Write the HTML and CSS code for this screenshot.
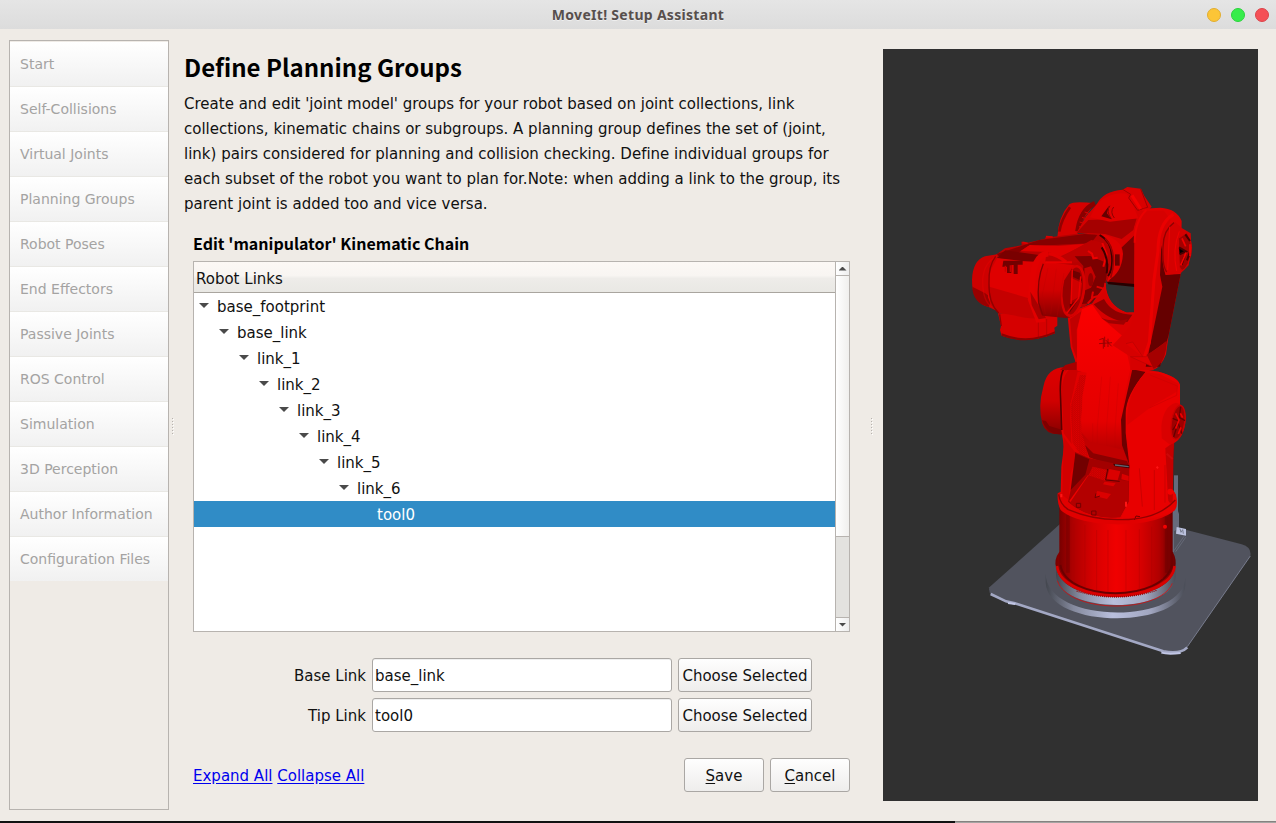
FILE: index.html
```html
<!DOCTYPE html>
<html lang="en">
<head>
<meta charset="utf-8">
<title>MoveIt! Setup Assistant</title>
<link rel="stylesheet" href="styles.css">
</head>
<body>
<div class="window">
  <header class="titlebar">
    <span class="title">MoveIt! Setup Assistant</span>
    <div class="controls"><i class="dot yellow"></i><i class="dot green"></i><i class="dot red"></i></div>
  </header>
  <div class="body">
    <nav class="sidebar">
      <div class="step">Start</div><div class="step">Self-Collisions</div><div class="step">Virtual Joints</div><div class="step">Planning Groups</div><div class="step">Robot Poses</div><div class="step">End Effectors</div><div class="step">Passive Joints</div><div class="step">ROS Control</div><div class="step">Simulation</div><div class="step">3D Perception</div><div class="step">Author Information</div><div class="step">Configuration Files</div>
    </nav>
    <div class="grip"><i></i><i></i><i></i><i></i><i></i><i></i></div>
    <main class="main">
      <h1>Define Planning Groups</h1>
      <p class="intro">Create and edit 'joint model' groups for your robot based on joint collections, link<br>collections, kinematic chains or subgroups. A planning group defines the set of (joint,<br>link) pairs considered for planning and collision checking. Define individual groups for<br>each subset of the robot you want to plan for.Note: when adding a link to the group, its<br>parent joint is added too and vice versa.</p>
      <section class="editor">
        <h2>Edit 'manipulator' Kinematic Chain</h2>
        <div class="tree">
          <div class="list">
            <div class="head">Robot Links</div>
            <div class="row d0"><b class="down"></b>base_footprint</div>
            <div class="row d1"><b class="down"></b>base_link</div>
            <div class="row d2"><b class="down"></b>link_1</div>
            <div class="row d3"><b class="down"></b>link_2</div>
            <div class="row d4"><b class="down"></b>link_3</div>
            <div class="row d5"><b class="down"></b>link_4</div>
            <div class="row d6"><b class="down"></b>link_5</div>
            <div class="row d7"><b class="down"></b>link_6</div>
            <div class="row d8 selected">tool0</div>
          </div>
          <div class="scroll">
            <div class="arrow"><b class="up"></b></div>
            <div class="thumb"></div>
            <div class="trough"></div>
            <div class="arrow last"><b class="down"></b></div>
          </div>
        </div>
        <div class="fields">
          <label>Base Link</label><div class="input">base_link</div><button>Choose Selected</button>
          <label>Tip Link</label><div class="input">tool0</div><button>Choose Selected</button>
        </div>
        <div class="actions">
          <div class="links"><a>Expand All</a> <a>Collapse All</a></div>
          <button><u>S</u>ave</button><button><u>C</u>ancel</button>
        </div>
      </section>
    </main>
    <div class="grip"><i></i><i></i><i></i><i></i><i></i><i></i></div>
    <svg class="view" viewBox="883 49 375 752">
      <defs>
        <linearGradient id="cyl"><stop offset="0" stop-color="#780000"/><stop offset=".12" stop-color="#ae0000"/><stop offset=".3" stop-color="#d60000"/><stop offset=".5" stop-color="#f00000"/><stop offset=".7" stop-color="#db0000"/><stop offset=".88" stop-color="#b00000"/><stop offset="1" stop-color="#680000"/></linearGradient>
        <linearGradient id="metal"><stop offset="0" stop-color="#43464e"/><stop offset=".2" stop-color="#858a9e"/><stop offset=".48" stop-color="#b9bfdd"/><stop offset=".75" stop-color="#a1a6c0"/><stop offset="1" stop-color="#4a4d57"/></linearGradient>
        <linearGradient id="fall" x2="0" y2="1"><stop offset="0" stop-color="#dd0000"/><stop offset=".5" stop-color="#d00000"/><stop offset="1" stop-color="#850000"/></linearGradient>
        <linearGradient id="fall2" x2="0" y2="1"><stop offset="0" stop-color="#ee0000"/><stop offset=".6" stop-color="#e40000"/><stop offset="1" stop-color="#a00000"/></linearGradient>
        <linearGradient id="neck" x2="0" y2="1"><stop offset="0" stop-color="#fb0000"/><stop offset="1" stop-color="#ee0000"/></linearGradient>
        <pattern id="mesh" width="7" height="6" patternUnits="userSpaceOnUse"><path d="M0 1h4M3 4h4" stroke="#a90000" stroke-width="1.6"/></pattern>
      </defs>
      <!-- mounting plate and base -->
      <g transform="translate(980 490) scale(.33333)">
        <path d="M28 292L240 102L600 115L785 163Q816 172 811 198L622 470Q602 494 560 486L36 318Q25 308 28 292Z" fill="#51535e"/>
        <path d="M32 312L78 334L105 340L550 484Q600 494 622 472" fill="none" stroke="#a3a8c4" stroke-width="8"/>
        <path d="M84 339l22 3M544 488q20 6 58 1" stroke="#c2c7e6" stroke-width="6" fill="none"/>
        <path d="M622 470L811 198" stroke="#777b8d" stroke-width="3"/>
        <path d="M584 0h9v60l4 12v42l-15 10v62h-10V60z" fill="#676b7b"/>
        <path d="M590 111l28 6v20l-30-6z" fill="#bcc2df"/><path d="M600 116l3 11l5-8l2 12" stroke="#777c90" stroke-width="3" fill="none"/>
        <path d="M582 182l30-43M587 185l30-43" stroke="#656977" stroke-width="3"/>
        <path d="M197 250C197 405 616 405 616 260L616 286C610 419 204 419 197 278Z" fill="url(#metal)"/>
        <path d="M228 228C230 350 580 350 587 228V260C580 374 235 374 228 255Z" fill="url(#metal)"/>
        <path d="M232 272C265 372 540 372 577 280" fill="none" stroke="#ec0000" stroke-width="2"/>
        <path d="M238 185Q220 210 229 235C250 350 565 350 585 235Q592 210 578 185Z" fill="url(#cyl)"/>
        <path d="M231 228C245 345 570 345 584 228" fill="none" stroke="#d90000" stroke-width="8"/>
        <path d="M290 303Q410 340 530 301" fill="none" stroke="#8e0000" stroke-width="4" stroke-dasharray="3 3"/>
        <path d="M238 50V225C260 338 550 338 578 225V50Z" fill="url(#cyl)"/>
        <path d="M241 225C260 338 550 338 576 225" fill="none" stroke="#6b0000" stroke-width="6"/>
        <path d="M282 100V280M315 105V293M350 120V301M384 120V306M438 120V306M478 118V301M515 110V288M548 100V268" stroke="#a80000" stroke-opacity=".35" stroke-width="3"/>
        <path d="M264 75V248M560 80V248" stroke="#610000" stroke-width="11" stroke-opacity=".35"/>
        <circle cx="555" cy="110" r="6" fill="#f50000"/>
      </g>
      <!-- shoulder and first joint -->
      <g transform="translate(1020 350) scale(.33333)">
        <path d="M462 376h12v135h-12z" fill="#646b7b"/>
        <path d="M138 52Q82 50 70 110Q53 170 67 221Q78 258 130 252Z" fill="url(#fall)"/>
        <path d="M66 211l12 2l10 15l40 12v13Q82 256 66 211Z" fill="#7d0000"/>
        <path d="M165 40Q122 60 120 125L124 240L132 290L124 350L122 425L113 430Q111 459 122 480C180 535 400 540 465 480Q475 465 468 435L459 420V325L462 280L480 160V105Q475 80 415 65L335 50Z" fill="#e10000"/>
        <path d="M135 53Q121 65 121 120L125 240" fill="none" stroke="#580000" stroke-width="5"/>
        <path d="M168 45Q126 63 125 125L131 250L155 282L150 165L185 66Z" fill="#cc0000"/>
        <path d="M131 260L155 294L172 314L152 370L146 450L127 435Z" fill="#d20000"/>
        <path d="M173 65L202 68L184 220L207 324L176 314L154 275L150 168Z" fill="#e00000"/>
        <path d="M180 75L200 75L182 210L205 322L180 312L158 278L151 170Z" fill="url(#mesh)"/>
        <path d="M172 20H334L330 60L310 150L306 280L327 345L211 322L184 246L187 140L200 68L172 62Z" fill="url(#fall2)"/>
        <path d="M218 220V314M245 80L232 230V320M271 80L260 230V327M295 100L285 240V334" fill="none" stroke="#bc0000" stroke-width="2" opacity=".4"/>
        <path d="M184 247L210 275L312 300L327 348Q265 339 208 322Z" fill="#c10000"/>
        <path d="M195 285L220 310L321 333L327 348Q250 342 208 322Z" fill="#8a0000"/>
        <path d="M337 58L377 66Q318 134 317 190V248L328 345L306 286L303 210Z" fill="#6c0000"/>
        <path d="M377 66Q320 134 318 190V248L330 345L326 455L303 505L360 510Q440 500 465 480L468 435L459 420V300L480 155V105Q470 80 415 65Z" fill="#e80000"/>
        <path d="M378 67L420 72L475 101L470 125L400 166L322 225Q315 135 378 67Z" fill="#dc0000"/>
        <path d="M390 75L472 108L470 136L388 174" fill="none" stroke="#cd0000" stroke-width="2"/>
        <path d="M165 306L207 324L328 350L326 455L301 500Q205 510 144 455L165 365Z" fill="#a30000"/>
        <path d="M166 310L208 328L196 374L152 420Z" fill="#720000"/>
        <path d="M150 455L207 376" stroke="#ee0000" stroke-width="6"/>
        <path d="M206 375L326 394L324 455L300 502Q210 510 150 458Z" fill="#b30000"/>
        <path d="M218 350L262 360L255 392L206 376ZM268 357l33 7l-8 27l-33-5zM306 371l20 7v15l-22-5zM254 395l33 5l-7 9l-31-6zM232 423l41 9l-12 15l-36-9z" fill="#db0000"/>
        <path d="M218 350L262 360L255 392L206 376Z" fill="url(#mesh)"/>
        <path d="M263 357l-6 33l42 4" fill="none" stroke="#5c0000" stroke-width="3"/><path d="M279 341l49 4v10l-44-6z" fill="#420000"/>
        <path d="M285 345l41 5" stroke="#5f6672" stroke-width="4"/>
        <path d="M169 460h13v12h-13zM215 483h13v12h-13zM343 510l5-12l12 2M228 430l-3 13l15-5" fill="none" stroke="#720000" stroke-width="3"/>
        <path d="M318 455v15M410 350l4 5M440 311l18 16M124 432v10" stroke="#ff1515" stroke-width="6"/>
        <path d="M358 355L367 470M403 360V480M435 345V458" stroke="#bd0000" stroke-width="2"/>
        <path d="M436 295l27-20-5 180q-12 10-14-10z" fill="#a80000" opacity=".6"/>
        <circle cx="451" cy="425" r="9" fill="#f20000"/>
        <path d="M424 228Q430 168 468 158Q500 165 497 213Q490 273 450 284L425 265Z" fill="#d90000"/>
        <ellipse cx="474" cy="217" rx="20" ry="51" transform="rotate(9 474 217)" fill="#9d0000" stroke="#c80000" stroke-width="4"/>
        <path d="M482 170l-4 32l17 10M458 205l18 8l-18 27M461 261l13-43l12 33" stroke="#660000" stroke-width="4" fill="none"/>
        <path d="M467 190l10 20l-10 26M481 190l7 13M483 232l-8 20" stroke="#ef0000" stroke-width="5" fill="none"/>
        <path d="M116 433Q120 463 145 479Q220 511 302 509Q412 510 466 450" fill="none" stroke="#930000" stroke-width="4"/>
      </g>
      <!-- upper arm, forearm and wrist -->
      <g transform="translate(960 170) scale(.33333)">
        <path d="M292 202Q295 140 328 103Q340 92 405 100L372 145L348 202Z" fill="#d50000"/>
        <path d="M298 185Q303 150 330 112" fill="none" stroke="#930000" stroke-width="8"/>
        <path d="M405 100Q362 120 353 184" fill="none" stroke="#890000" stroke-width="15"/>
        <path d="M374 126l24 8M366 142l23 8M359 156l23 8M357 170l23 6" stroke="#d80000" stroke-width="3"/>
        <path d="M350 188L378 139L410 103Q430 63 488 59L502 51L543 56L553 78L575 110L541 145L527 345L440 339L457 230L412 195Z" fill="#d50000"/>
        <path d="M350 188L385 150L530 145L520 180L485 207L435 192Z" fill="#a50000"/>
        <path d="M410 104Q448 64 500 71L521 110L535 145L450 155L390 142Z" fill="#df0000"/>
        <path d="M488 58L512 73L506 84L533 121L563 112L542 57" fill="#d90000" stroke="#a00000" stroke-width="3"/>
        <path d="M516 76L542 117" stroke="#f40000" stroke-width="9"/>
        <path d="M424 139L447 107L441 130L455 148Z" fill="#660000"/>
        <path d="M450 107Q437 124 454 146M461 111Q449 126 463 144" fill="none" stroke="#8b0000" stroke-width="3"/>
        <path d="M484 233L525 194V350L441 341L449 329Q485 301 484 233Z" fill="#7b0000"/>
        <path d="M420 193Q485 204 489 251Q486 309 444 331L451 241Z" fill="#df0000"/>
        <path d="M465 253h14v34h-14z" fill="#6c0000"/>
        <path d="M322 430L397 400L430 351L438 344Q441 400 499 427L521 425L525 250Q521 150 549 116L601 113Q650 116 665 153L662 312L626 495L618 553Q603 593 579 600H350L345 571L332 532Z" fill="#de0000"/>
        <path d="M438 335L525 346L522 427L499 427Q441 405 438 344Z" fill="#303030"/>
        <path d="M441 335L525 342V351L445 343Z" fill="#260000"/>
        <path d="M397 400L434 355Q447 412 500 428L520 431L516 470L458 525L420 527L378 444Z" fill="#d80000"/>
        <path d="M401 403L432 387Q456 433 517 434L502 456Q446 453 401 403Z" fill="#8c0000"/>
        <path d="M417 440Q453 458 504 448L491 464L447 460Z" fill="#a00000"/>
        <path d="M330 447L365 423L350 480L352 570L337 530Z" fill="#c00000"/>
        <path d="M366 418L397 404L425 445L490 500L512 600H350L352 480Z" fill="url(#neck)"/>
        <path d="M418 509l12-4v31M434 500v31M444 506v25M417 521l39-3M437 510l18 19" fill="none" stroke="#8e0000" stroke-width="2.5"/>
        <path d="M522 430L512 468L458 526L511 560V600H580L565 550L608 350L600 315L604 225L632 150L612 122L544 123L523 170Z" fill="#d60000"/>
        <path d="M604 225L600 315L607 350L557 590L600 590L626 495L662 312L617 314Z" fill="#650000"/>
        <path d="M559 120Q524 154 524 218" fill="none" stroke="#e80000" stroke-width="6"/>
        <path d="M640 133Q594 160 594 243L582 330L568 517L552 565" fill="none" stroke="#ea0000" stroke-width="9"/>
        <path d="M498 521l20-5l30 44M557 560L618 516L607 572L581 592L511 560Z" stroke="#b80000" stroke-width="2" fill="#de0000"/>
        <path d="M560 554Q595 535 620 512Q620 575 581 597Z" fill="#a50000"/>
        <path d="M646 156Q616 167 607 225Q604 281 617 315L662 310L686 286L694 231L692 190L665 174Z" fill="#d40000"/>
        <path d="M642 158Q610 180 609 231Q606 288 620 306" fill="none" stroke="#910000" stroke-width="4"/>
        <path d="M658 184Q636 240 650 303M629 170L623 300" fill="none" stroke="#ef0000" stroke-width="3"/>
        <path d="M681 188Q707 227 684 281Q666 316 658 290L655 205Z" fill="#a20000" stroke="#d30000" stroke-width="3"/>
        <path d="M676 193l14 20M657 232l21 12l-19 9M681 271l8-23M665 284l8-25" stroke="#470000" stroke-width="6"/>
        <path d="M666 205l11 24M678 248l-16 38M690 223v35" stroke="#f20000" stroke-width="5"/>
        <!-- forearm -->
        <path d="M100 260L135 235L185 226L184 215L200 219L255 206L258 198L280 200L351 191L418 193L454 227L451 313L410 380L372 411L292 415L182 272Z" fill="#b80000"/>
        <path d="M110 252L238 210L374 192L412 195L393 220L203 229L135 276Z" fill="#850000"/>
        <path d="M187 217L203 220M258 200L278 201" stroke="#db0000" stroke-width="5"/>
        <path d="M182 243L209 225L295 228L380 221L302 259L266 246Z" fill="#e00000"/>
        <path d="M303 262L394 210L431 219L445 274L438 325L369 272L338 279Z" fill="#bd0000"/>
        <path d="M344 259L391 258L446 281L435 345L395 400L364 402L370 288Z" fill="#7c0000"/>
        <path d="M384 243l12 8l4 14l13-2M427 219l13 35l-10 36" stroke="#ed0000" stroke-width="6" fill="none"/>
        <path d="M419 195Q455 215 456 260Q459 299 444 318M425 232Q447 265 440 310" fill="none" stroke="#3a0000" stroke-width="6"/>
        <path d="M435 205Q475 247 452 323" fill="none" stroke="#9d0000" stroke-width="5"/>
        <path d="M373 295l20-6l14 31l-14 33l-18 8z" fill="#c40000"/><ellipse cx="392" cy="329" rx="8" ry="20" fill="#900000"/>
        <path d="M436 339l-3 20l-18 19l-15 4l-17 19M410 350l20 6M399 365l-4 22" fill="none" stroke="#dc0000" stroke-width="6"/>
        <!-- wrist -->
        <path d="M114 430L123 468L120 480L125 497Q199 525 285 490L283 473L292 467V437Z" fill="#d60000"/>
        <path d="M119 433L124 468" stroke="#950000" stroke-width="4"/><path d="M235 440V506M260 447V501" stroke="#b80000" stroke-width="3"/>
        <path d="M125 490Q203 522 285 484V490Q200 528 125 497Z" fill="#8e0000"/>
        <path d="M112 253L75 259Q38 272 36 329Q35 398 86 411L105 420Z" fill="#cd0000"/>
        <path d="M37 350Q38 398 86 411L98 388L76 370Z" fill="#980000"/>
        <path d="M112 258Q70 278 68 332Q68 395 96 410" fill="none" stroke="#ec0000" stroke-width="4" opacity=".4"/>
        <path d="M112 263L222 273L241 258L258 259L232 448L195 442L118 429L95 410L84 382L90 305Z" fill="#df0000"/>
        <path d="M88 350L211 386L232 447L195 443L115 428L91 405Z" fill="#c50000"/>
        <path d="M107 259Q85 287 87 340Q85 399 116 429" fill="none" stroke="#900000" stroke-width="4"/>
        <path d="M117 258L136 241L237 255L224 275L183 273L112 264Z" fill="#790000"/>
        <path d="M130 272h58v12h-15v28h-12v-27h-7v24h-13v-19h-14z" fill="#730000"/>
        <path d="M136 287v18M151 286v20" stroke="#c70000" stroke-width="4"/>
        <path d="M265 251Q225 254 219 316L212 388L235 449L255 447" fill="none" stroke="#e20000" stroke-width="17"/>
        <path d="M211 365L215 405L236 448L258 444L238 410Z" fill="#a80000"/>
        <path d="M255 275L342 286Q378 306 374 366Q360 444 318 444L247 437Q225 401 238 329Q244 289 255 275Z" fill="url(#fall)"/>
        <path d="M250 281Q230 329 236 398L248 435" fill="none" stroke="#830000" stroke-width="4"/>
        <path d="M265 251Q292 254 318 276" fill="none" stroke="#e20000" stroke-width="10"/>
        <path d="M256 277H336" stroke="#ea0000" stroke-width="6"/>
        <path d="M264 294L247 374L256 432M289 296L272 433M312 309L291 440" stroke="#b70000" stroke-width="2" fill="none" opacity=".4"/>
        <ellipse cx="340" cy="363" rx="31" ry="75" transform="rotate(9 340 363)" fill="#a20000" stroke="#d50000" stroke-width="8"/>
        <path d="M336 295L332 398L317 425Q300 380 313 331Z" fill="#960000"/>
        <path d="M334 324L366 339L361 379L333 394Z" fill="#cf0000"/>
        <path d="M337 301l23 7l6 25l-29-13zM329 402l25-11l-25 37z" fill="#6f0000"/>
        <path d="M337 300L333 402M362 319L356 384L320 430" stroke="#ec0000" stroke-width="4" fill="none"/>
        <path d="M350 575V600H300L316 585Z" fill="#a60000"/>
      </g>
    </svg>
  </div>
  <footer class="edge"><i></i></footer>
</div>
</body>
</html>
```
FILE: styles.css
```css
* { box-sizing: border-box; }
body { margin: 0; background: #efebe6; color: #111; font: 15px "DejaVu Sans", sans-serif; }
.window { width: 1276px; height: 823px; display: flex; flex-direction: column; overflow: hidden; }
.titlebar { height: 29px; flex: none; display: grid; grid-template-columns: 1fr auto 1fr; align-items: center; background: linear-gradient(#e5e5e5, #dcdcdc); padding: 0 7px; }
.title { grid-column: 2; color: #574f4d; font: bold 14px "Noto Sans", sans-serif; letter-spacing: 0.3px; text-shadow: 0 1px #eee; }
.controls { display: flex; justify-content: flex-end; gap: 10px; }
.dot { width: 14px; height: 14px; border-radius: 50%; border: 1px solid; }
.yellow { background: #fcc537; border-color: #e1ae31; }
.green { background: #37ed4b; border-color: #2bd33d; }
.red { background: #f55056; border-color: #dc444b; }
.body { height: 792px; flex: none; display: flex; align-items: flex-start; }
.sidebar { width: 160px; height: 770px; flex: none; margin: 11px 0 0 9px; padding-top: 1px; border: 1px solid #b7b3af; }
.step { height: 45px; padding: 0 0 0 10px; line-height: 45px; font-size: 14px; color: #a4a3a2; white-space: nowrap; background: linear-gradient(#fff, #f1f1f1); border-bottom: 1px solid #e9e8e4; }
.step:last-child { height: 44px; border-bottom: 0; }
.grip { flex: none; width: 2px; margin: 389px 0 0 3px; display: flex; flex-direction: column; gap: 2px; }
.grip i { width: 1px; height: 1px; background: #b6b2ae; box-shadow: 1px 1px #fff; }
.main { width: 686px; flex: none; margin-left: 10px; }
.main + .grip { margin-left: 1px; }
h1 { margin: 18px 0 0; height: 45px; line-height: 39px; font-family: "Noto Sans CJK SC", sans-serif; font-size: 24px; font-weight: 700; color: #000; white-space: nowrap; }
.intro { margin: 0; line-height: 25px; letter-spacing: 0.005px; white-space: nowrap; }
.editor { width: 657px; margin-left: 9px; }
h2 { margin: 10px 0 0; height: 34px; font: 700 16px/33px "Noto Sans CJK SC", sans-serif; color: #000; }
.tree { height: 371px; display: flex; border: 1px solid #b7b3af; background: #fff; }
.list { flex: 1; }
.head { height: 31px; padding-left: 2px; line-height: 34px; background: linear-gradient(#fcf8f5, #f8f5f2 45%, #eeece9 55%, #e9e8e4); border-bottom: 1px solid #a9a59f; }
.row { height: 26px; padding-top: 2px; line-height: 24px; display: flex; align-items: center; padding-left: calc(5px + 20px * var(--d)); }
.row .down { margin: -3px 9px 0 0; }
.down, .up { width: 10px; height: 5px; background: #4a4a4a; clip-path: polygon(0 0, 100% 0, 50% 100%); }
.row .down { margin-right: 8px; }
.up { clip-path: polygon(0 100%, 50% 0, 100% 100%); }
.d0 { --d: 0; } .d1 { --d: 1; } .d2 { --d: 2; } .d3 { --d: 3; } .d4 { --d: 4; } .d5 { --d: 5; } .d6 { --d: 6; } .d7 { --d: 7; }
.selected { padding-left: 183px; color: #fff; background: #308cc6; }
.scroll { width: 14px; border-left: 1px solid #b7b3af; display: flex; flex-direction: column; }
.arrow { height: 14px; flex: none; display: flex; align-items: center; justify-content: center; border-bottom: 1px solid #b7b3af; background: linear-gradient(90deg, #fff, #eee); }
.arrow .up, .arrow .down { width: 8px; height: 4px; }
.last { border-bottom: 0; border-top: 1px solid #b7b3af; }
.thumb { height: 261px; background: linear-gradient(90deg, #fff, #f0efed); border-bottom: 1px solid #b7b3af; }
.trough { flex: 1; background: #e3e2df; }
.fields { display: grid; grid-template-columns: 173px 300px 134px; gap: 6px; margin-top: 26px; align-items: center; }
label { padding-top: 2px; text-align: right; }
.input, button { height: 34px; border: 1px solid #aaa7a4; border-radius: 3px; }
.input { padding-left: 2px; line-height: 35px; background: #fff; box-shadow: inset 0 1px #efefef; }
button { padding: 2px 0 0; font: inherit; color: #111; background: linear-gradient(#fefefe, #eeedec); white-space: nowrap; }
u { text-underline-offset: 2px; }
.actions { display: grid; grid-template-columns: 1fr 80px 80px; gap: 6px; margin-top: 26px; align-items: center; }
.links { padding-top: 2px; }
a { color: #0000ee; text-decoration: underline; text-underline-offset: 2px; }
.view { width: 375px; height: 752px; flex: none; margin: 20px 0 0 10px; background: #303030; }
.edge { height: 2px; flex: none; background: linear-gradient(#858280 0 1px, #a5a4a2 1px); }
.edge i { display: block; width: 955px; height: 2px; background: #111; }
```
